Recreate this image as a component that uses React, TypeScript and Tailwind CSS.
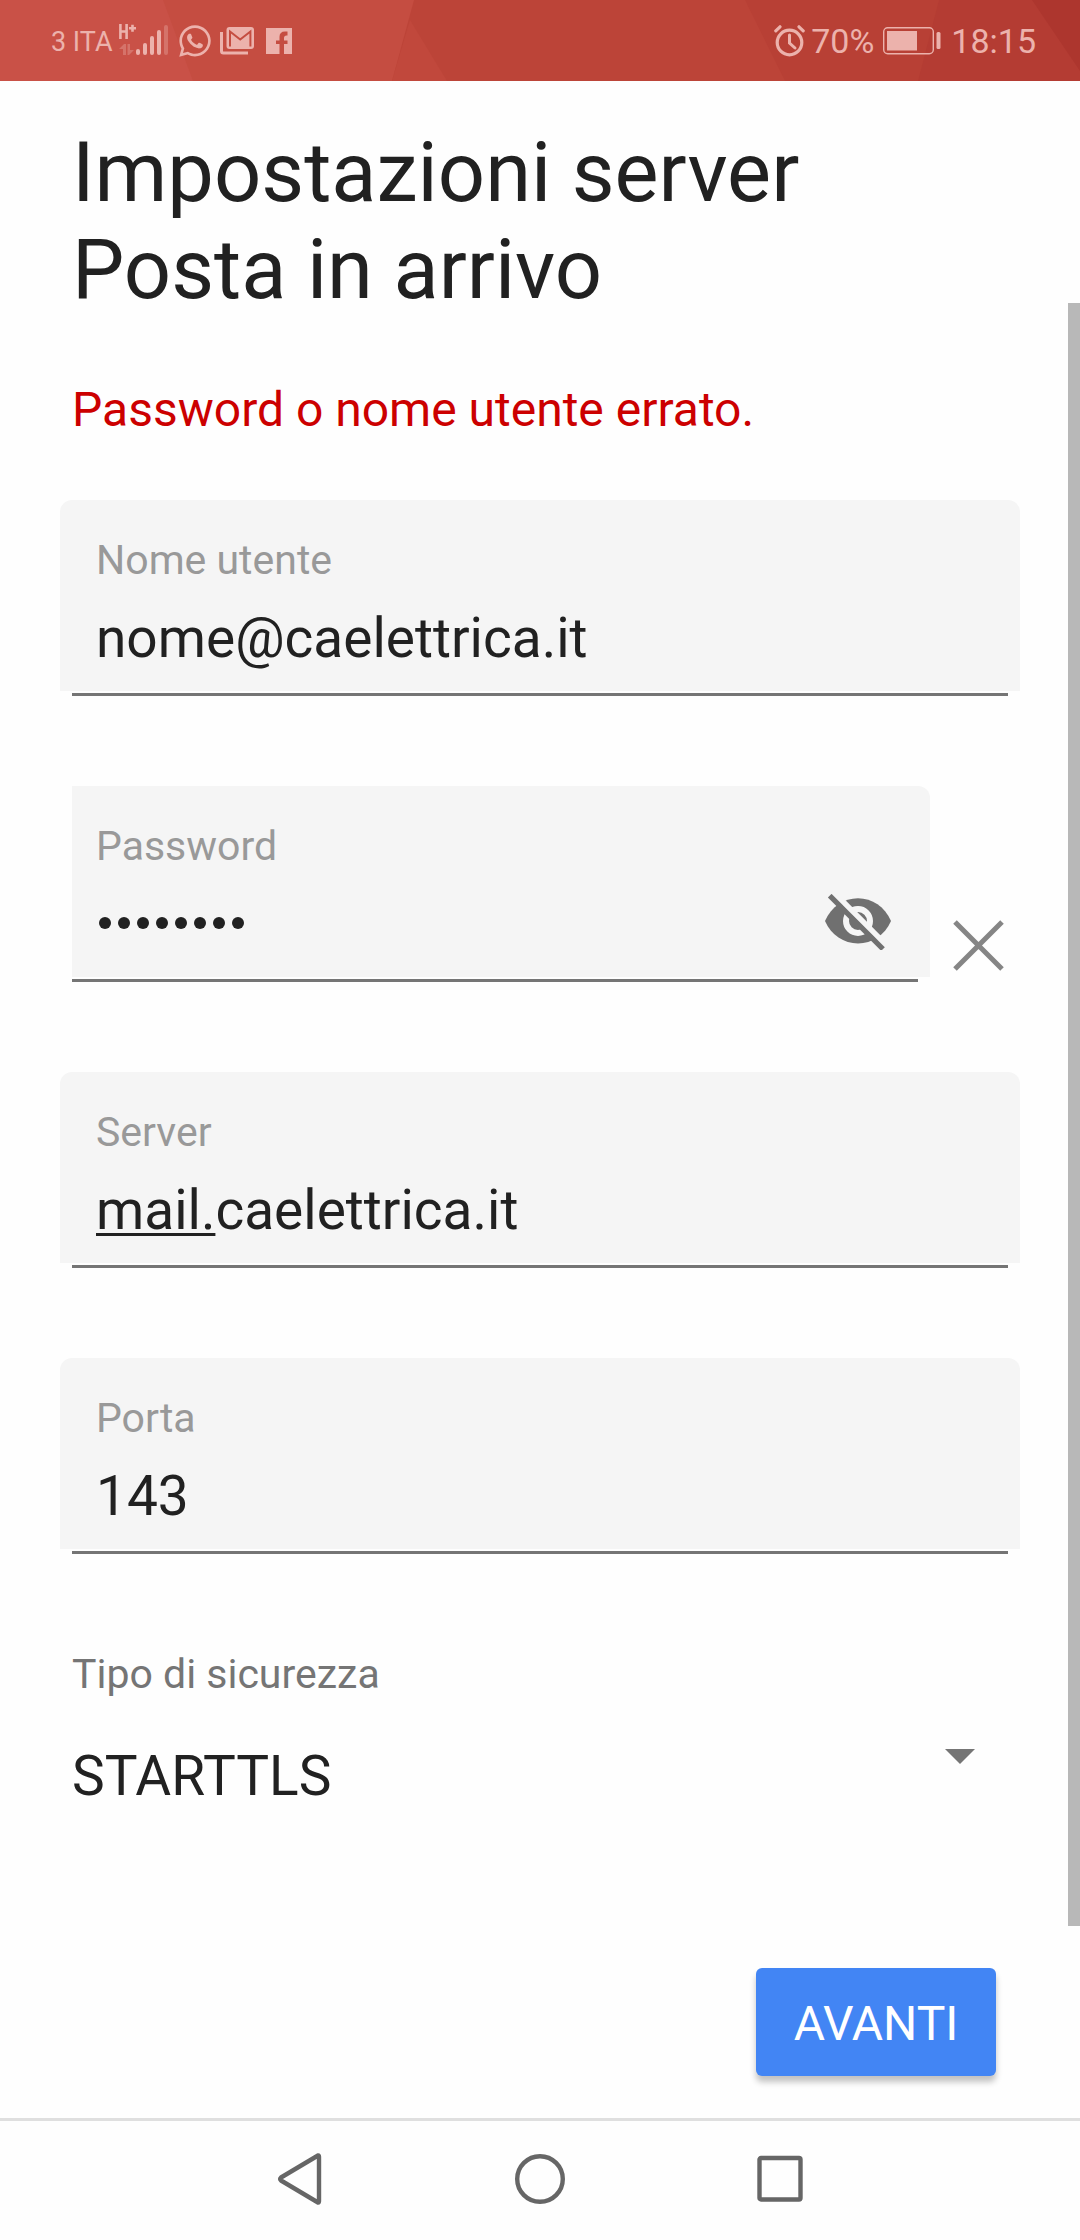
import type { ReactNode } from 'react';
import { FaWhatsapp } from 'react-icons/fa';

const TEXT_FIELDS = {
  username: { label: 'Nome utente', value: 'nome@caelettrica.it' },
  port: { label: 'Porta', value: '143' },
};

function SignalIcon() {
  return (
    <svg width="50" height="32" viewBox="0 0 50 32" className="mb-px ml-1.5">
      <g stroke="currentColor" strokeWidth="2.6" fill="none">
        <path d="M1.400 0v15M7.600 0v15M1.400 7.500h6.200M10 4.200h7M13.500.8v7" />
      </g>
      <g fill="currentColor" opacity="0.35">
        <path d="M0 25l5-5h2v11H4v-6zM8.500 20h2.500v6h4l-5 5h-1.500z" />
        <rect x="45" y="1" width="4" height="30" rx="2" />
      </g>
      <g fill="currentColor">
        <rect x="17" y="25" width="4" height="6" rx="2" />
        <rect x="24" y="19" width="4" height="12" rx="2" />
        <rect x="31" y="12" width="4" height="19" rx="2" />
        <rect x="38" y="6" width="4" height="25" rx="2" />
      </g>
    </svg>
  );
}

function GmailStackIcon() {
  return (
    <svg width="34" height="28" viewBox="0 0 34 28" className="ml-[7px]">
      <path d="M1.500 5v19q0 2 2 2h24.500" fill="none" stroke="currentColor" strokeWidth="3" />
      <rect x="6.500" y="0" width="27.500" height="22" rx="3" fill="currentColor" />
      <path d="M10 19.500V4.500l10.200 8 10.200-8v15" fill="none" stroke="#c54d41" strokeWidth="2" />
    </svg>
  );
}

function FacebookIcon() {
  return (
    <svg width="26" height="26" viewBox="0 0 26 26" className="ml-3">
      <path
        fill="currentColor"
        d="M0 0h26v26h-8v-10h3.500v-3.500H18V10q0-2.500 2.500-2.500h1v-4H19q-5.500 0-5.500 5.500v3.500H10V16h3.500v10H0z"
      />
    </svg>
  );
}

function AlarmIcon() {
  return (
    <svg width="31" height="32" viewBox="0 0 31 32" fill="none" stroke="currentColor">
      <circle cx="15.500" cy="17.500" r="12.300" strokeWidth="3.200" />
      <path d="M15.500 10v8l5.500 5" strokeWidth="3" strokeLinecap="round" />
      <path d="M1.800 5.800l4.200-4M29.200 5.800l-4.200-4" strokeWidth="3.200" strokeLinecap="round" />
    </svg>
  );
}

function BatteryIcon() {
  return (
    <svg width="58" height="28" viewBox="0 0 58 28" className="ml-[9px]">
      <rect x="0.700" y="0.700" width="49.600" height="26" rx="4" fill="none" stroke="currentColor" strokeWidth="1.400" />
      <rect x="4" y="4" width="30" height="19.500" fill="currentColor" />
      <rect x="53.500" y="5" width="4" height="17" rx="1.500" fill="currentColor" />
    </svg>
  );
}

function StatusBar() {
  return (
    <header className="relative h-[81px] shrink-0 overflow-hidden bg-[#bc4438] text-[#ecb2ac]">
      <svg width="1080" height="81" viewBox="0 0 1080 81" className="absolute inset-0">
        <path d="M0 0h414l-22 81H0z" fill="#c54d41" />
        <path d="M0 0h163l30 81H0z" fill="#c95147" />
        <path d="M410 20l37 61h-55z" fill="#c1483c" />
        <path d="M745 0h335v81H785z" fill="#b84035" />
        <path d="M939 0h141v81H918z" fill="#b43c33" />
        <path d="M1032 0h48v71z" fill="#ad362e" />
      </svg>
      <div className="relative flex h-full items-center pr-11 pl-[51px]">
        <span className="pt-[3px] text-[27px] leading-8">3 ITA</span>
        <SignalIcon />
        <FaWhatsapp className="mt-px ml-2 h-9 w-9" />
        <GmailStackIcon />
        <FacebookIcon />
        <div className="ml-auto flex items-center">
          <AlarmIcon />
          <span className="ml-1.5 pt-px text-[34px] leading-10">70%</span>
          <BatteryIcon />
          <span className="ml-2.5 pt-px text-[34px] leading-10">18:15</span>
        </div>
      </div>
    </header>
  );
}

type FieldProps = {
  label: string;
  children: ReactNode;
  trailing?: ReactNode;
};

function FieldBody({ label, children, trailing }: FieldProps) {
  return (
    <div className="flex h-[155px] items-start">
      <div className="flex grow flex-col">
        <span className="text-[41px] leading-12 text-[#999999]">{label}</span>
        <div className="mt-[22px] text-[55px] leading-16 text-[#212121]">{children}</div>
      </div>
      {trailing}
    </div>
  );
}

function TextField({ label, children }: FieldProps) {
  return (
    <div className="mb-[90px] h-[196px]">
      <div className="h-[191px] rounded-t-xl bg-[#f5f5f5] px-9 pt-9">
        <FieldBody label={label}>{children}</FieldBody>
      </div>
      <div className="mx-3 mt-0.5 h-[3px] bg-[#757575]" />
    </div>
  );
}

function EyeOffIcon() {
  return (
    <svg width="68" height="56" viewBox="0 0 68 56" className="mt-[72px]">
      <path d="M1 27C7 13 20 4.300 34 4.300S61 13 67 27C61 41 48 49.500 34 49.500S7 41 1 27z" fill="#707070" />
      <circle cx="34" cy="27" r="12" fill="#707070" stroke="#f5f5f5" strokeWidth="6" />
      <path d="M8.500-2.500l56 56" stroke="#f5f5f5" strokeWidth="6" />
      <path d="M5.700 1.700l53.300 53.300" stroke="#707070" strokeWidth="5.200" />
    </svg>
  );
}

function PasswordField() {
  return (
    <div className="mb-[90px] ml-3 flex h-[196px]">
      <div className="w-[858px]">
        <div className="h-[191px] rounded-tr-xl bg-[#f5f5f5] pt-9 pr-[38px] pl-6">
          <FieldBody label="Password" trailing={<EyeOffIcon />}>
            <div className="flex h-[62px] items-center gap-[7px] pl-[3px]" aria-label="password">
              {Array.from({ length: 8 }, (_, i) => (
                <span key={i} className="h-3 w-3 rounded-full bg-[#212121]" />
              ))}
            </div>
          </FieldBody>
        </div>
        <div className="mt-0.5 mr-3 h-[3px] bg-[#757575]" />
      </div>
      <svg width="53" height="53" viewBox="0 0 53 53" className="mt-[133px] ml-[22px]">
        <path d="M3 3l47 47M50 3l-47 47" stroke="#858585" strokeWidth="5" />
      </svg>
    </div>
  );
}

function NavBar() {
  return (
    <nav className="h-[122px] shrink-0 border-t-3 border-[#dfdfdf]">
      <div className="flex justify-between pt-[31px] pr-[275px] pl-[275px]">
        <svg width="50" height="54" viewBox="0 0 50 54" fill="none" stroke="#666" strokeWidth="4.400">
          <path d="M43 3.500Q44 3.300 44 5v44q0 1.700-1 1.500L6 28.500Q4.500 27 6 25.500z" strokeLinejoin="round" />
        </svg>
        <svg width="54" height="54" viewBox="0 0 54 54" fill="none" stroke="#666" strokeWidth="4.400">
          <circle cx="27" cy="27" r="22.800" />
        </svg>
        <svg width="50" height="54" viewBox="0 0 50 54" fill="none" stroke="#666" strokeWidth="4.400">
          <rect x="4.500" y="6" width="41" height="41.500" rx="1.500" />
        </svg>
      </div>
    </nav>
  );
}

export default function App() {
  return (
    <div className="relative flex h-[2240px] w-[1080px] flex-col overflow-hidden bg-[#fefefe] font-[Roboto,sans-serif]">
      <StatusBar />

      <main className="flex grow flex-col px-[60px] pt-[43px]">
        <h1 className="px-3 text-[83px] leading-[97px] text-[#212121]">
          Impostazioni server
          <br />
          Posta in arrivo
        </h1>
        <p className="mt-[64px] px-3 text-[48px] leading-14 text-[#cc0000]">Password o nome utente errato.</p>

        <div className="mt-[62px] flex flex-col">
          <TextField label={TEXT_FIELDS.username.label}>{TEXT_FIELDS.username.value}</TextField>
          <PasswordField />
          <TextField label="Server">
            <span className="underline decoration-3 underline-offset-4 [text-decoration-skip-ink:none]">mail.</span>caelettrica.it
          </TextField>
          <TextField label={TEXT_FIELDS.port.label}>{TEXT_FIELDS.port.value}</TextField>
        </div>

        {/* Security type select */}
        <div className="px-3 pt-1.5">
          <span className="block text-[41px] leading-12 text-[#757575]">Tipo di sicurezza</span>
          <div className="mt-[46px] flex items-start justify-between pr-[33px]">
            <span className="text-[55px] leading-16 text-[#212121]">STARTTLS</span>
            <svg width="30" height="15" viewBox="0 0 30 15" className="mt-[5px]">
              <path d="M0 0h30L15 15z" fill="#757575" />
            </svg>
          </div>
        </div>
      </main>

      <footer className="flex h-[150px] shrink-0 items-start justify-end pr-[84px]">
        <button className="h-[108px] w-60 rounded-md bg-[#4285f4] pt-1 text-[48px] leading-14 text-white shadow-[0_6px_6px_rgba(0,0,0,0.24)]">
          AVANTI
        </button>
      </footer>

      <NavBar />

      {/* Scroll indicator */}
      <div className="absolute top-[303px] right-0 h-[1623px] w-3 bg-[#b8b8b8]" />
    </div>
  );
}
